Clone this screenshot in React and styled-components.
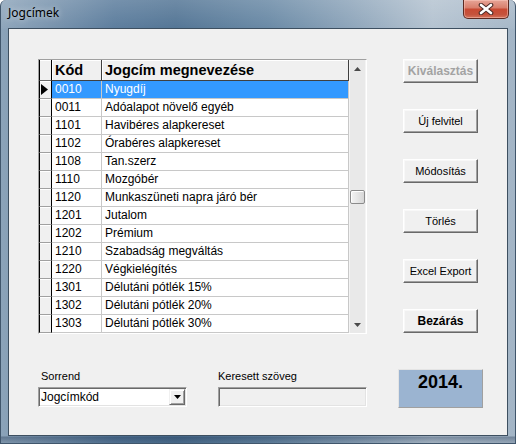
import React from 'react';
import styled, { createGlobalStyle } from 'styled-components';

const Global = createGlobalStyle`
  html, body { margin: 0; padding: 0; background: #ffffff; }
  body { font-family: "Liberation Sans", Arial, sans-serif; }
  #root { width: 516px; height: 444px; }
`;

const Window = styled.div`
  width: 516px;
  height: 444px;
  box-sizing: border-box;
  display: flex;
  flex-direction: column;
  padding: 0 7px 7px;
  border-radius: 6px 6px 0 0;
  border: 1px solid #40566c;
  border-top: none;
  background:
    linear-gradient(180deg, rgba(255,255,255,0.18) 0px, rgba(255,255,255,0.04) 28px, rgba(0,0,0,0) 30px, rgba(0,0,0,0) 436px, rgba(20,40,70,0.35) 437px, rgba(0,0,0,0.05) 444px),
    linear-gradient(90deg, #8ba3b9 0%, #7893ad 8%, #57799a 22%, #4e7192 34%, #6586a3 52%, #8aa2b8 68%, #b2c1cf 84%, #a3b5c6 100%);
`;

const TitleBar = styled.div`
  height: 28px;
  flex: none;
  display: flex;
  align-items: flex-start;
  justify-content: space-between;
`;

const Title = styled.div`
  padding-top: 5px;
  font-family: "Noto Sans", "Liberation Sans", sans-serif;
  font-size: 12px;
  line-height: 16px;
  color: #000;
  text-shadow: 0 0 6px rgba(255, 255, 255, 0.7);
`;

const CloseButton = styled.div`
  width: 46px;
  height: 19px;
  margin-right: -1px;
  box-sizing: border-box;
  border: 1px solid #5c2a22;
  border-top: none;
  border-radius: 0 0 5px 5px;
  background: linear-gradient(180deg, #e7a597 0%, #d9806e 42%, #c84a33 52%, #c5523c 80%, #d3735c 100%);
  box-shadow: inset 0 0 0 1px rgba(255, 210, 200, 0.45);
  display: flex;
  align-items: center;
  justify-content: center;
`;

const Client = styled.div`
  flex: 1;
  background: #f0f0f0;
  border: 1px solid #3d4f60;
  padding: 30px 0 0 29px;
  display: flex;
  flex-direction: column;
`;

const TopRow = styled.div`
  display: flex;
  align-items: flex-start;
`;

const DataGrid = styled.div`
  display: flex;
  border: 1px solid;
  border-color: #a0a0a0 #ffffff #ffffff #a0a0a0;
  background: #ffffff;
`;

const Table = styled.div`
  width: 310px;
  display: flex;
  flex-direction: column;
`;

const HeaderRow = styled.div`
  display: flex;
  height: 21px;
`;

const HeadCorner = styled.div`
  width: 13px;
  box-sizing: border-box;
  background: #f0f0f0;
  border-left: 1px solid #000;
  border-right: 1px solid #000;
  border-bottom: 1px solid #696969;
  box-shadow: inset 0 1px #ffffff;
`;

const HeadCell = styled.div`
  width: ${p => p.$w}px;
  box-sizing: border-box;
  background: #f0f0f0;
  border-right: 1px solid #404040;
  border-bottom: 1px solid #404040;
  box-shadow: inset 1px 1px #ffffff;
  padding-left: 3px;
  font-weight: bold;
  font-size: 14.5px;
  line-height: 20px;
  color: #000;
  white-space: nowrap;
  overflow: hidden;
`;

const Row = styled.div`
  display: flex;
  height: 18px;
`;

const Indicator = styled.div`
  width: 13px;
  box-sizing: border-box;
  background: #f0f0f0;
  border-left: 1px solid #000;
  border-right: 1px solid #000;
  border-bottom: 1px solid #a0a0a0;
  box-shadow: inset 0 1px #ffffff;
  display: flex;
  align-items: center;
`;

const Cell = styled.div`
  width: ${p => p.$w}px;
  box-sizing: border-box;
  border-right: 1px solid #c8c8c8;
  border-bottom: 1px solid #c8c8c8;
  background: ${p => (p.$sel ? '#3399ff' : '#ffffff')};
  color: ${p => (p.$sel ? '#ffffff' : '#000000')};
  padding-left: 3px;
  font-size: 12px;
  line-height: 17px;
  white-space: nowrap;
  overflow: hidden;
`;

const ScrollBar = styled.div`
  width: 17px;
  display: flex;
  flex-direction: column;
  background: #e9e9e9;
  box-shadow: inset 1px 0 #f4f4f4, inset -1px 0 #f4f4f4;
`;

const ScrollBtn = styled.div`
  height: 17px;
  flex: none;
  display: flex;
  align-items: center;
  justify-content: center;
`;

const Track = styled.div`
  flex: 1;
  display: flex;
  flex-direction: column;
  align-items: center;
`;

const Thumb = styled.div`
  width: 15px;
  height: 14px;
  box-sizing: border-box;
  border: 1px solid #8b8b8b;
  border-radius: 2px;
  background: linear-gradient(90deg, #f4f4f4 0%, #e6e6e6 50%, #d6d6d6 100%);
  box-shadow: inset 1px 1px #ffffff;
`;

const ButtonCol = styled.div`
  margin-left: 36px;
  display: flex;
  flex-direction: column;
  gap: 26px;
`;

const Button = styled.div`
  width: 75px;
  height: 24px;
  box-sizing: border-box;
  background: #f0f0f0;
  border: 1px solid;
  border-color: #ffffff #696969 #696969 #ffffff;
  box-shadow: inset -1px -1px #a0a0a0, inset 1px 1px #f8f8f8;
  display: flex;
  align-items: center;
  justify-content: center;
  font-size: ${p => (p.$bold ? '12px' : '11px')};
  font-weight: ${p => (p.$bold ? 'bold' : 'normal')};
  color: ${p => (p.$disabled ? '#a3a3a3' : '#000000')};
  white-space: nowrap;
`;

const BottomRow = styled.div`
  display: flex;
  align-items: flex-start;
  margin-top: 35px;
  gap: 31px;
`;

const Field = styled.div`
  width: 149px;
  display: flex;
  flex-direction: column;
`;

const Label = styled.div`
  font-size: 11px;
  line-height: 14px;
  margin-bottom: 4px;
  padding-left: ${p => p.$indent || 0}px;
  color: #000;
`;

const Sunken = styled.div`
  height: 20px;
  box-sizing: border-box;
  border: 1px solid;
  border-color: #a0a0a0 #ffffff #ffffff #a0a0a0;
  box-shadow: inset 1px 1px #696969, inset -1px -1px #e3e3e3;
  background: ${p => (p.$disabled ? '#f0f0f0' : '#ffffff')};
  display: flex;
  align-items: center;
  justify-content: space-between;
  padding: 0 1px 0 2px;
`;

const ComboText = styled.div`
  font-size: 12px;
  line-height: 16px;
  color: #000;
`;

const DropBtn = styled.div`
  width: 16px;
  height: 16px;
  box-sizing: border-box;
  background: #f0f0f0;
  border: 1px solid;
  border-color: #f0f0f0 #696969 #696969 #f0f0f0;
  box-shadow: inset 1px 1px #ffffff, inset -1px -1px #a0a0a0;
  display: flex;
  align-items: center;
  justify-content: center;
`;

const YearBox = styled.div`
  width: 85px;
  height: 39px;
  box-sizing: border-box;
  background: #9bb4d1;
  border: 1px solid;
  border-color: #e4e4e4 #a0a0a0 #a0a0a0 #e4e4e4;
  text-align: center;
  padding-top: 3px;
  font-size: 18px;
  line-height: 18px;
  font-weight: bold;
  color: #000;
`;

const rows = [
  ['0010', 'Nyugdíj'],
  ['0011', 'Adóalapot növelő egyéb'],
  ['1101', 'Havibéres alapkereset'],
  ['1102', 'Órabéres alapkereset'],
  ['1108', 'Tan.szerz'],
  ['1110', 'Mozgóbér'],
  ['1120', 'Munkaszüneti napra járó bér'],
  ['1201', 'Jutalom'],
  ['1202', 'Prémium'],
  ['1210', 'Szabadság megváltás'],
  ['1220', 'Végkielégítés'],
  ['1301', 'Délutáni pótlék 15%'],
  ['1302', 'Délutáni pótlék 20%'],
  ['1303', 'Délutáni pótlék 30%'],
];

const Arrow = ({ up }) => (
  <svg width="7" height="4" viewBox="0 0 7 4">
    {up ? <path d="M3.5 0 L7 4 L0 4 Z" fill="#4a4a4a" /> : <path d="M0 0 L7 0 L3.5 4 Z" fill="#4a4a4a" />}
  </svg>
);

export default function App() {
  return (
    <>
      <Global />
      <Window>
        <TitleBar>
          <Title>Jogcímek</Title>
          <CloseButton>
            <svg width="16" height="12" viewBox="0 0 16 12">
              <path d="M3 2 L13 10 M13 2 L3 10" stroke="#4a2a26" strokeWidth="4.6" strokeLinecap="round" />
              <path d="M3 2 L13 10 M13 2 L3 10" stroke="#ffffff" strokeWidth="2.6" strokeLinecap="round" />
            </svg>
          </CloseButton>
        </TitleBar>
        <Client>
          <TopRow>
            <DataGrid>
              <Table>
                <HeaderRow>
                  <HeadCorner />
                  <HeadCell $w={50}>Kód</HeadCell>
                  <HeadCell $w={247}>Jogcím megnevezése</HeadCell>
                </HeaderRow>
                {rows.map(([code, name], i) => (
                  <Row key={code}>
                    <Indicator>
                      {i === 0 && (
                        <svg width="9" height="11" viewBox="0 0 9 11">
                          <path d="M1 0 L8 5.5 L1 11 Z" fill="#000" />
                        </svg>
                      )}
                    </Indicator>
                    <Cell $w={50} $sel={i === 0}>{code}</Cell>
                    <Cell $w={247} $sel={i === 0}>{name}</Cell>
                  </Row>
                ))}
              </Table>
              <ScrollBar>
                <ScrollBtn><Arrow up /></ScrollBtn>
                <Track>
                  <Thumb style={{ marginTop: 113 }} />
                </Track>
                <ScrollBtn><Arrow /></ScrollBtn>
              </ScrollBar>
            </DataGrid>
            <ButtonCol>
              <Button $bold $disabled>Kiválasztás</Button>
              <Button>Új felvitel</Button>
              <Button>Módosítás</Button>
              <Button>Törlés</Button>
              <Button>Excel Export</Button>
              <Button $bold>Bezárás</Button>
            </ButtonCol>
          </TopRow>
          <BottomRow>
            <Field>
              <Label $indent={3}>Sorrend</Label>
              <Sunken>
                <ComboText>Jogcímkód</ComboText>
                <DropBtn>
                  <svg width="7" height="4" viewBox="0 0 7 4">
                    <path d="M0 0 L7 0 L3.5 4 Z" fill="#000" />
                  </svg>
                </DropBtn>
              </Sunken>
            </Field>
            <Field>
              <Label>Keresett szöveg</Label>
              <Sunken $disabled />
            </Field>
            <YearBox>2014.</YearBox>
          </BottomRow>
        </Client>
      </Window>
    </>
  );
}
